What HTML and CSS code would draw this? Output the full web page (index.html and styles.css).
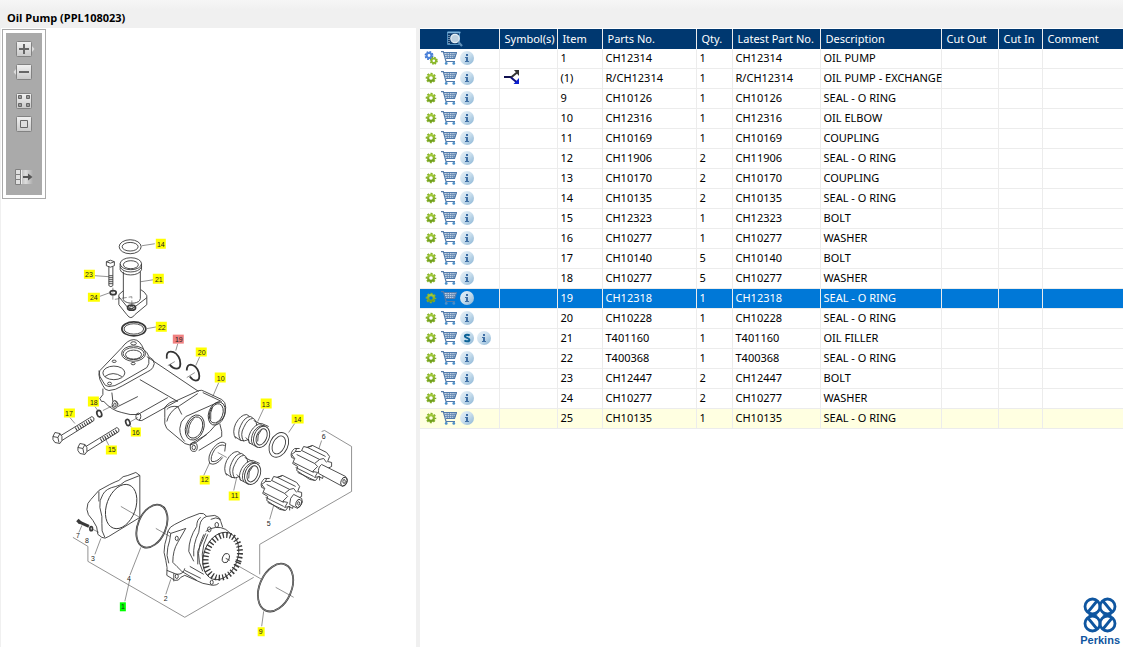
FILE: index.html
```html
<!DOCTYPE html>
<html lang="en">
<head>
<meta charset="utf-8">
<title>Oil Pump (PPL108023)</title>
<link rel="stylesheet" href="styles.css">
</head>
<body>
<svg class="defs" aria-hidden="true">
  <defs>
    <linearGradient id="g-green" x1="0" y1="0" x2="0" y2="1"><stop offset="0" stop-color="#a2c93a"/><stop offset="1" stop-color="#6f9d1c"/></linearGradient>
    <linearGradient id="g-disc" x1="0" y1="0" x2="1" y2="1"><stop offset="0" stop-color="#e8f1f8"/><stop offset=".5" stop-color="#c9deed"/><stop offset="1" stop-color="#86b2d4"/></linearGradient>
    <linearGradient id="g-btn" x1="0" y1="0" x2="0" y2="1"><stop offset="0" stop-color="#f2f2f2"/><stop offset="1" stop-color="#c8c8c8"/></linearGradient>
    <linearGradient id="g-fade"><stop offset="0" stop-color="#bbb"/><stop offset=".4" stop-color="#ddd"/><stop offset="1" stop-color="#aaa"/></linearGradient>
    <symbol id="cog" viewBox="0 0 14 14">
      <circle cx="7" cy="7" r="4.3" fill="none" stroke="#84b128" stroke-width="2" stroke-dasharray="2 1.377" stroke-dashoffset="1"/>
      <circle cx="7" cy="7" r="2.9" fill="none" stroke="url(#g-green)" stroke-width="2.2"/>
    </symbol>
    <symbol id="cogs" viewBox="0 0 14 14">
      <circle cx="5" cy="4.5" r="3.5" fill="none" stroke="#3c73cf" stroke-width="1.9" stroke-dasharray="1.6 1.15"/>
      <circle cx="5" cy="4.5" r="2.4" fill="none" stroke="#4c82da" stroke-width="2"/>
      <circle cx="9.8" cy="9.8" r="3.2" fill="none" stroke="#7fae22" stroke-width="1.6" stroke-dasharray="1.5 1.01"/>
      <circle cx="9.8" cy="9.8" r="2.2" fill="none" stroke="#8bb92a" stroke-width="1.8"/>
    </symbol>
    <symbol id="cart" viewBox="0 0 16 14">
      <path d="M3 1.5h12.5l-2 6H5z" fill="#c3d2e3"/>
      <path d="M3.5 3.500h11.500M4 5.500h10.500M6 1.5l.5 6M8.500 1.500v6M11 1.500l-.4 6M13.300 1.500l-1 6" stroke="#5f86b3" stroke-width=".8" fill="none"/>
      <path d="M0 .6h2.300L5 10.500h9M3 1.500h12.500l-2 6H5" stroke="#527bab" stroke-width="1.200" fill="none"/>
      <circle cx="5.200" cy="12.400" r="1.400" fill="#4a8fc9"/><circle cx="12.800" cy="12.400" r="1.400" fill="#4a8fc9"/>
    </symbol>
    <symbol id="info" viewBox="0 0 14 14">
      <circle cx="7" cy="7" r="7" fill="url(#g-disc)"/>
      <path d="M6 3h2v2H6zM5 6h3v4h1v1H5v-1h1V7H5z" fill="#3f6fa5"/>
    </symbol>
    <symbol id="sub" viewBox="0 0 14 14">
      <circle cx="7" cy="7" r="7" fill="url(#g-disc)"/>
      <path d="M9.600 4.600C8.800 3.500 4.900 3.100 4.900 5.200c0 2 4.500 1.300 4.500 3.500 0 2.200-3.700 2-4.900.7" fill="none" stroke="#0c6398" stroke-width="2"/>
    </symbol>
    <symbol id="branch" viewBox="0 0 16 16">
      <path d="M0 7h8" stroke="#101050" stroke-width="2"/>
      <path d="M7 7.500l6-5" stroke="#333" stroke-width="2"/><path d="M10 0h5v6z" fill="#333"/>
      <path d="M7 7.500l6 5" stroke="#101080" stroke-width="2"/><path d="M15 8v6H9.500z" fill="#0b1fd0"/>
    </symbol>
    <symbol id="look" viewBox="0 0 18 16">
      <path d="M1.500 1h12v12.500h-12z" fill="#0b3a6c" stroke="#4f8fc0" stroke-width="1"/>
      <path d="M1.500 1.500h13" stroke="#7db4dc" stroke-width="1.500"/><path d="M3 4v9" stroke="#cfe1ef" stroke-width="1" stroke-dasharray="1 1"/>
      <circle cx="9" cy="7.500" r="4.200" fill="#bcd0df" stroke="#e3edf4" stroke-width="1.300"/>
      <path d="M12.300 11l3.700 4" stroke="#5f8fb8" stroke-width="2.200"/>
    </symbol>
  </defs>
</svg>

<header class="titlebar"><h1>Oil Pump (PPL108023)</h1></header>
<main class="panes">
<section class="drawing">
  <div class="toolbar" role="toolbar" aria-label="Drawing tools">
    <button type="button" aria-label="Zoom in"><svg viewBox="0 0 18 16"><path d="M17 5l2.500 3-2.500 3z" fill="#ddd"/><rect x="1.500" y=".5" width="15" height="15" rx="1" fill="url(#g-btn)" stroke="#828282"/><path d="M4 8h10M9 3v10" stroke="#666" stroke-width="2"/></svg></button>
    <button type="button" aria-label="Zoom out"><svg viewBox="0 0 18 16"><path d="M1 5L-1.500 8 1 11z" fill="#ddd"/><rect x="1.500" y=".5" width="15" height="15" rx="1" fill="url(#g-btn)" stroke="#828282"/><path d="M4 8h10" stroke="#666" stroke-width="2"/></svg></button>
    <button type="button" class="gap-above" aria-label="Tile view"><svg viewBox="0 0 18 16"><rect x="1.500" y=".5" width="15" height="15" rx="1" fill="url(#g-btn)" stroke="#828282"/><path d="M3.500 2.500h3v3h-3zM11.500 2.500h3v3h-3zM3.500 10.500h3v3h-3zM11.500 10.500h3v3h-3z" fill="#999" stroke="#666"/></svg></button>
    <button type="button" aria-label="Fit to window"><svg viewBox="0 0 18 16"><rect x="1.500" y=".5" width="15" height="15" rx="1" fill="url(#g-btn)" stroke="#828282"/><path d="M5.500 4.500h7v7h-7z" fill="#ddd" stroke="#666"/></svg></button>
    <button type="button" class="gap-wide" aria-label="Export list"><svg viewBox="0 0 18 16"><path d="M6 1h12v14H6z" fill="url(#g-fade)"/><path d="M.5.500h5v5h-5zM.5 5.500h5v5h-5zM.5 10.500h5v5h-5z" fill="#e0e0e0" stroke="#808080"/><path d="M6.500 1v14" stroke="#eee"/><path d="M8 8h6" stroke="#555" stroke-width="2"/><path d="M13 4.500L17.500 8 13 11.500z" fill="#555"/></svg></button>
  </div>
  <svg class="diagram" viewBox="1 28 415 619" role="img" aria-label="Exploded view of the oil pump">
    <!-- frames, leaders and axes -->
    <g class="lead">
      <path d="M322 432l3-1 27 16v45l-92 53v30M73 538l15 9v15l97 56 69-40"/>
      <path d="M142 246l13-2M95 276l14 1M141 282l13-2M99 297l11-4M147 329l11-2M178 344l-2 7M200 357l-4 9M219 383l-6 14M95 407l3 4M70 418l5 6M132 428l-3-3M109 446l-4-8M264 409l-6 13M295 424l-6 9M204 476l6-13M234 491l3-13M322 441l-3 9M270 520l4-14M130 576l11-28M95 555l6-16M166 595l5-15M125 602l5-22M262 627l2-15M79 533l3-7"/>
      <path d="M121 507l19 11M156 529l14 8M227 560l35 20M276 588l18 10M168 366l7-4M187 378l8-5M103 411l10-5M131 422l7-4M218 453l9 5M93 530l6 3" />
      <path d="M113 288v12l19-3v9" stroke-dasharray="5 2"/>
    </g>
    <!-- filler tube, rings and bolt -->
    <g class="ink">
      <ellipse cx="130.300" cy="247" rx="11" ry="7"/><ellipse cx="130.300" cy="247" rx="8" ry="4.300"/>
      <ellipse cx="131" cy="264" rx="10.700" ry="6"/><ellipse cx="131" cy="265" rx="7.500" ry="4"/>
      <path d="M120.300 264v6c2 7 19 7 21.400 0v-6M120.300 267c2 7 19 7 21.400 0M123.500 272v27c-1 5 16 7 17 0v-27M123.500 291l-4.500 4v10l8 10q4 6 8 0l12-10v-9q-2-4-6-6M119 297l9 11q3 3 6 0l13-10"/>
      <ellipse cx="131.700" cy="308" rx="4" ry="2.500" class="heavy"/><ellipse cx="131.700" cy="308" rx="2" ry="1"/>
      <path d="M106.500 262q4-3 8 0v4q-4 3-8 0zM106.500 262q4 3 8 0M109 267v19q2 2 4 0v-19M109 276h4M109 278h4M109 280h4M109 282h4M109 284h4"/>
      <ellipse cx="113.300" cy="293" rx="3" ry="2" class="heavy"/>
      <ellipse cx="134" cy="329.300" rx="12" ry="7" class="heavy"/><ellipse cx="134" cy="329.300" rx="9.800" ry="5.200"/>
    </g>
    <!-- elbow -->
    <g class="ink">
      <path d="M122 348q6-8 12-8t10 10q4 3 5 7l4 3q3 4 0 8-2 3-5 4l-25 14q-8 5-14 5-4 0-6-5l-3-6q-2-6 0-9z"/>
      <path d="M99 371q0 6 4 11 2 5 6 5 6 0 12-4l26-15q3-3 2-10"/>
      <ellipse cx="133.700" cy="354" rx="12" ry="7.700"/><ellipse cx="133.700" cy="354" rx="10.500" ry="6"/><ellipse cx="133.700" cy="355" rx="8" ry="4.500"/>
      <ellipse cx="133.700" cy="343.700" rx="2.800" ry="1.600"/><ellipse cx="114.300" cy="361.700" rx="2" ry="1.200"/><ellipse cx="133.300" cy="364" rx="2" ry="1.200"/><ellipse cx="109.700" cy="384" rx="2" ry="1.400"/>
      <ellipse cx="114" cy="373.300" rx="11" ry="6.800"/><path d="M105 377q8-6 17 0"/>
      <path d="M147 357l52 35M140 380l38 22M103 389v6l-3 4q1 4 4 3 8 9 18 11 8 3 17 2M112 393l1 9M118 407l20-10M138 415l30-17M142 421l36-20"/>
      <ellipse cx="115" cy="405" rx="2.700" ry="4"/><ellipse cx="115" cy="405.500" rx="1.200" ry="2"/><ellipse cx="138.500" cy="417" rx="2.500" ry="3.500"/><path d="M139 421l3 0M115 401l4 4"/>
      <path d="M199 391q3-1 6 1l17 8q4 2 4 8l-1 7q-1 5-7 8l-8 9q-8 7-15 12-5 3-10 0l-18-15q-3-4-2-11v-10q4-6 12-7z"/>
      <path d="M167 410q3-4 11-3l4 8M167 422q2-10 13-16l18-12M186 417q-6 5-6 12 0 8 5 13M186 417l34-15M203 393l19 9"/>
      <g transform="rotate(20 195 428)"><ellipse cx="195" cy="428" rx="9" ry="13"/><ellipse cx="195" cy="428" rx="7.500" ry="11"/></g>
      <path d="M194 419q-6 6-5 15"/>
      <g transform="rotate(20 217 414)"><ellipse cx="217" cy="414" rx="8" ry="12"/><ellipse cx="216.500" cy="414" rx="6.500" ry="10"/></g>
      <path d="M213 407q-3 6-2 13M220 424l2 8v5l-23 14M190 445l17-10"/>
      <ellipse cx="194" cy="447.500" rx="3.500" ry="4.500"/><ellipse cx="194" cy="448" rx="1.700" ry="2.300"/>
    </g>
    <!-- long bolts and washers -->
    <g class="ink">
      <g id="long-bolt"><path d="M61 436l31-19q3 1 2 4l-32 20M53 437l2-4 5 1 2 3v4l-2 3-5-1-2-3zM53 437l5 1 2-4M58 438l1 5"/>
      <path d="M76 430l17-10" stroke-width="4" stroke-dasharray="1 1.500"/></g>
      <use href="#long-bolt" x="25" y="11"/>
      <ellipse cx="99.300" cy="414.300" rx="2.300" ry="3.300" transform="rotate(-20 99 414)" class="heavy"/>
      <ellipse cx="128" cy="423" rx="2" ry="3.200" transform="rotate(-20 128 423)" class="heavy"/>
      <path d="M167 359q-1-7 4-7 6 0 9 8 2 9-3 9-4 0-7-4M187 371q0-6 4-6 6 1 8 8 2 8-3 8-3 0-6-4" class="ring"/>
      <path d="M226 444q-5-4-12 4-7 9-4 16 6 3 13-6M225 446q-5-2-10 4-5 8-3 12 5 1 10-5M226 444l-1 8" />
    </g>
    <!-- couplings -->
    <g class="ink">
      <g id="coupling">
        <path d="M236 439q-4-6 0-15 5-9 11-9l3 2M241 441q-4-7 0-15 4-9 10-9l4 3q2 3 2 6M244 442q-4-7 0-14 4-9 9-9M235 437l6 4q4 1 8-1M254 421l8 4M246 438l4 4M250 444q-3-4 1-12 5-8 11-8l7 3M249 443l9 5"/>
        <path d="M253 445q-3-5 1-13 5-7 11-6"/>
        <g transform="rotate(22 261 437)"><ellipse cx="262" cy="437" rx="7.500" ry="11" class="part"/><ellipse cx="262" cy="437" rx="5" ry="8.500"/></g>
        <path d="M262 430q-5 5-4 12"/>
      </g>
      <use href="#coupling" x="-9" y="37"/>
      <g transform="rotate(25 279 445)"><ellipse cx="279.300" cy="445.300" rx="9" ry="13"/><ellipse cx="279.300" cy="445.300" rx="6" ry="9.500"/></g>
    </g>
    <!-- pinions -->
    <g class="ink">
      <g id="pinion">
        <path d="M300 449l-5 0q-5 4-3 9l5 2M297 449q-3 4-1 9"/>
        <path class="part" d="M302 451l2-4 4 1 5-2 14 7 3 4-2 5 4 1v4l-4 2 1 5-5 0-1 5-4-2-3 4-6-1-13-9 1-4-5-3 2-5-3-4 4-3 5 0z"/>
        <path d="M302 451l18 9M308 448l18 9M297 455l18 9M294 463l20 10M296 468l18 9M298 473l17 8M320 460l-5 4 3 3-5 5 5 1-3 5 5-1v4M320 460l4-1 3 4M313 446l-6 2"/>
      </g>
      <path class="part" d="M322 465l24 12q3 4 0 8l-3 2-24-13q-1-6 3-9z"/><ellipse cx="344.500" cy="482" rx="3" ry="4.500" transform="rotate(20 344 482)"/><ellipse cx="344.500" cy="482" rx="1.200" ry="2"/>
      <use href="#pinion" x="-30" y="30"/>
      <path class="part" d="M294 495l8 4q2 4-1 7l-3 3-8-4q0-7 4-10z"/><ellipse cx="299" cy="504" rx="2.700" ry="4.200" transform="rotate(20 299 504)"/><ellipse cx="299" cy="504" rx="1" ry="1.800"/>
    </g>
    <!-- end cover and its screw -->
    <g class="ink">
      <path d="M136 473l4 3v42l-31 19q-4 3-7 1l-4-3q0-8-5-14-6-6-6-11 0-7 4-10l8-9 11-6q6-3 9-4 4-5 9-5z"/>
      <path d="M140 476l-15 6q-4 4-9 5-10 2-13 8-4 6-3 13 3 10 2 16-1 8 3 14M99 492v10"/>
      <ellipse cx="121.300" cy="507" rx="14.500" ry="23" transform="rotate(20 121 507)"/>
      <path d="M79 522.500l10 4.500" stroke-width="3"/><path d="M77.500 520.500l3 3" stroke-width="3.500"/><ellipse cx="91.300" cy="529.300" rx="1.300" ry="2" class="heavy"/>
      <ellipse cx="152" cy="526.700" rx="14" ry="22.500" transform="rotate(23 152 527)" class="ring"/>
      <ellipse cx="276" cy="588.300" rx="16" ry="25" transform="rotate(23 276 588)" class="ring"/>
      <ellipse cx="276" cy="588.300" rx="16" ry="25" transform="rotate(23 276 588)" stroke="#ccc" stroke-width=".5"/>
      <ellipse cx="152" cy="526.700" rx="14" ry="22.500" transform="rotate(23 152 527)" stroke="#ccc" stroke-width=".4"/>
    </g>
    <!-- pump body and drive gear -->
    <g class="ink">
      <path d="M168 532q2-5 7-7l12-6 13-5q4-1 7 3l8-1q5 1 6 6l2 6M168 532q-1 7-3 13-2 8 1 16 2 7 1 15l8 5q4 1 6-3l4-2 18 8 10 2q4 0 6-2M168 532l3 2 15-5-8 14q-5 8-5 20 4 4 9 9l15 9M201 518q-4 2-4 9-8 12-8 25l5 10M207 517q-6 2-7 9l-1 7q-6 12-5 24M211 520q5-3 10 0M174 574v8M167 571l10 4q7 0 8-6M206 534l-8 18 0 13M171 534q-1 8-3 14-2 8 1 16"/>
      <path d="M206 532q10-7 20-2l7 6M204 535q-10 20-1 37M208 535q-10 20-2 39M185 571l16 8M190 567l14 8"/>
      <ellipse cx="177" cy="539" rx="1.500" ry="2.200"/><ellipse cx="209.500" cy="530" rx="1.800" ry="2.500"/><ellipse cx="217" cy="525.500" rx="1.800" ry="2.500"/><ellipse cx="177" cy="577" rx="1.500" ry="2.200"/><ellipse cx="212" cy="583" rx="1.500" ry="2.200"/>
      <ellipse class="part" cx="221" cy="557" rx="17" ry="24.500" transform="rotate(20 222 557)"/>
      <ellipse cx="223" cy="557" rx="16.500" ry="22" transform="rotate(20 223 557)" stroke-width="6" stroke-dasharray="1.400 2.200"/>
      <ellipse class="part" cx="226" cy="558.700" rx="3.300" ry="4.800" transform="rotate(20 226 559)"/>
      <path d="M226 559l4 2"/>
    </g>
    <!-- item numbers -->
    <g class="tag">
      <path d="M156 239h10v10h-10zM84 270h11v9H84zM153 274h11v10h-11zM88 293h12v9H88zM156 322h11v10h-11zM196 348h11v9h-11zM215 373h11v10h-11zM88 397h11v10H88zM64 409h11v9H64zM131 428h10v9h-10zM106 446h11v9h-11zM261 399h11v10h-11zM292 415h12v9h-12zM200 476h10v9h-10zM229 492h11v9h-11zM258 628h7v9h-7z"/>
      <path class="tag-picked" d="M173 335h11v9h-11z"/><path class="tag-current" d="M120 603h6v9h-6z"/>
      <text x="161" y="247">14</text><text x="89" y="277">23</text><text x="159" y="282">21</text><text x="94" y="300">24</text><text x="162" y="330">22</text><text x="179" y="342">19</text><text x="202" y="355">20</text><text x="221" y="381">10</text><text x="94" y="405">18</text><text x="69" y="416">17</text><text x="136" y="435">16</text><text x="112" y="453">15</text><text x="266" y="407">13</text><text x="298" y="422">14</text><text x="205" y="483">12</text><text x="235" y="499">11</text><text x="261" y="635">9</text><text x="123" y="610">1</text>
      <text x="324" y="440">6</text><text x="269" y="527">5</text><text x="129" y="582">4</text><text x="93" y="562">3</text><text x="78" y="539">7</text><text x="87" y="544">8</text><text x="166" y="602">2</text>
    </g>
  </svg>
</section>

<section class="parts">
<table>
<colgroup><col class="c-tools"><col class="c-symbol"><col class="c-item"><col class="c-part"><col class="c-qty"><col class="c-latest"><col class="c-desc"><col class="c-out"><col class="c-in"><col></colgroup>
<thead><tr><th class="look" aria-label="Actions"><svg><use href="#look"/></svg></th><th>Symbol(s)</th><th>Item</th><th>Parts No.</th><th>Qty.</th><th>Latest Part No.</th><th>Description</th><th>Cut Out</th><th>Cut In</th><th>Comment</th></tr></thead>
<tbody>
<tr><td><div class="acts"><button type="button" aria-label="Assembly"><svg><use href="#cogs"/></svg></button><button type="button" class="cart" aria-label="Add to cart"><svg><use href="#cart"/></svg></button><button type="button" aria-label="Information"><svg><use href="#info"/></svg></button></div></td><td></td><td>1</td><td>CH12314</td><td>1</td><td>CH12314</td><td>OIL PUMP</td><td></td><td></td><td></td></tr>
<tr><td><div class="acts"><button type="button" aria-label="Part"><svg><use href="#cog"/></svg></button><button type="button" class="cart" aria-label="Add to cart"><svg><use href="#cart"/></svg></button><button type="button" aria-label="Information"><svg><use href="#info"/></svg></button></div></td><td><svg class="branch" role="img" aria-label="Exchange"><use href="#branch"/></svg></td><td>(1)</td><td>R/CH12314</td><td>1</td><td>R/CH12314</td><td>OIL PUMP - EXCHANGE</td><td></td><td></td><td></td></tr>
<tr><td><div class="acts"><button type="button" aria-label="Part"><svg><use href="#cog"/></svg></button><button type="button" class="cart" aria-label="Add to cart"><svg><use href="#cart"/></svg></button><button type="button" aria-label="Information"><svg><use href="#info"/></svg></button></div></td><td></td><td>9</td><td>CH10126</td><td>1</td><td>CH10126</td><td>SEAL - O RING</td><td></td><td></td><td></td></tr>
<tr><td><div class="acts"><button type="button" aria-label="Part"><svg><use href="#cog"/></svg></button><button type="button" class="cart" aria-label="Add to cart"><svg><use href="#cart"/></svg></button><button type="button" aria-label="Information"><svg><use href="#info"/></svg></button></div></td><td></td><td>10</td><td>CH12316</td><td>1</td><td>CH12316</td><td>OIL ELBOW</td><td></td><td></td><td></td></tr>
<tr><td><div class="acts"><button type="button" aria-label="Part"><svg><use href="#cog"/></svg></button><button type="button" class="cart" aria-label="Add to cart"><svg><use href="#cart"/></svg></button><button type="button" aria-label="Information"><svg><use href="#info"/></svg></button></div></td><td></td><td>11</td><td>CH10169</td><td>1</td><td>CH10169</td><td>COUPLING</td><td></td><td></td><td></td></tr>
<tr><td><div class="acts"><button type="button" aria-label="Part"><svg><use href="#cog"/></svg></button><button type="button" class="cart" aria-label="Add to cart"><svg><use href="#cart"/></svg></button><button type="button" aria-label="Information"><svg><use href="#info"/></svg></button></div></td><td></td><td>12</td><td>CH11906</td><td>2</td><td>CH11906</td><td>SEAL - O RING</td><td></td><td></td><td></td></tr>
<tr><td><div class="acts"><button type="button" aria-label="Part"><svg><use href="#cog"/></svg></button><button type="button" class="cart" aria-label="Add to cart"><svg><use href="#cart"/></svg></button><button type="button" aria-label="Information"><svg><use href="#info"/></svg></button></div></td><td></td><td>13</td><td>CH10170</td><td>2</td><td>CH10170</td><td>COUPLING</td><td></td><td></td><td></td></tr>
<tr><td><div class="acts"><button type="button" aria-label="Part"><svg><use href="#cog"/></svg></button><button type="button" class="cart" aria-label="Add to cart"><svg><use href="#cart"/></svg></button><button type="button" aria-label="Information"><svg><use href="#info"/></svg></button></div></td><td></td><td>14</td><td>CH10135</td><td>2</td><td>CH10135</td><td>SEAL - O RING</td><td></td><td></td><td></td></tr>
<tr><td><div class="acts"><button type="button" aria-label="Part"><svg><use href="#cog"/></svg></button><button type="button" class="cart" aria-label="Add to cart"><svg><use href="#cart"/></svg></button><button type="button" aria-label="Information"><svg><use href="#info"/></svg></button></div></td><td></td><td>15</td><td>CH12323</td><td>1</td><td>CH12323</td><td>BOLT</td><td></td><td></td><td></td></tr>
<tr><td><div class="acts"><button type="button" aria-label="Part"><svg><use href="#cog"/></svg></button><button type="button" class="cart" aria-label="Add to cart"><svg><use href="#cart"/></svg></button><button type="button" aria-label="Information"><svg><use href="#info"/></svg></button></div></td><td></td><td>16</td><td>CH10277</td><td>1</td><td>CH10277</td><td>WASHER</td><td></td><td></td><td></td></tr>
<tr><td><div class="acts"><button type="button" aria-label="Part"><svg><use href="#cog"/></svg></button><button type="button" class="cart" aria-label="Add to cart"><svg><use href="#cart"/></svg></button><button type="button" aria-label="Information"><svg><use href="#info"/></svg></button></div></td><td></td><td>17</td><td>CH10140</td><td>5</td><td>CH10140</td><td>BOLT</td><td></td><td></td><td></td></tr>
<tr><td><div class="acts"><button type="button" aria-label="Part"><svg><use href="#cog"/></svg></button><button type="button" class="cart" aria-label="Add to cart"><svg><use href="#cart"/></svg></button><button type="button" aria-label="Information"><svg><use href="#info"/></svg></button></div></td><td></td><td>18</td><td>CH10277</td><td>5</td><td>CH10277</td><td>WASHER</td><td></td><td></td><td></td></tr>
<tr class="selected"><td><div class="acts"><button type="button" aria-label="Part"><svg><use href="#cog"/></svg></button><button type="button" class="cart" aria-label="Add to cart"><svg><use href="#cart"/></svg></button><button type="button" aria-label="Information"><svg><use href="#info"/></svg></button></div></td><td></td><td>19</td><td>CH12318</td><td>1</td><td>CH12318</td><td>SEAL - O RING</td><td></td><td></td><td></td></tr>
<tr><td><div class="acts"><button type="button" aria-label="Part"><svg><use href="#cog"/></svg></button><button type="button" class="cart" aria-label="Add to cart"><svg><use href="#cart"/></svg></button><button type="button" aria-label="Information"><svg><use href="#info"/></svg></button></div></td><td></td><td>20</td><td>CH10228</td><td>1</td><td>CH10228</td><td>SEAL - O RING</td><td></td><td></td><td></td></tr>
<tr><td><div class="acts"><button type="button" aria-label="Part"><svg><use href="#cog"/></svg></button><button type="button" class="cart" aria-label="Add to cart"><svg><use href="#cart"/></svg></button><button type="button" aria-label="Supersession"><svg><use href="#sub"/></svg></button><button type="button" aria-label="Information"><svg><use href="#info"/></svg></button></div></td><td></td><td>21</td><td>T401160</td><td>1</td><td>T401160</td><td>OIL FILLER</td><td></td><td></td><td></td></tr>
<tr><td><div class="acts"><button type="button" aria-label="Part"><svg><use href="#cog"/></svg></button><button type="button" class="cart" aria-label="Add to cart"><svg><use href="#cart"/></svg></button><button type="button" aria-label="Information"><svg><use href="#info"/></svg></button></div></td><td></td><td>22</td><td>T400368</td><td>1</td><td>T400368</td><td>SEAL - O RING</td><td></td><td></td><td></td></tr>
<tr><td><div class="acts"><button type="button" aria-label="Part"><svg><use href="#cog"/></svg></button><button type="button" class="cart" aria-label="Add to cart"><svg><use href="#cart"/></svg></button><button type="button" aria-label="Information"><svg><use href="#info"/></svg></button></div></td><td></td><td>23</td><td>CH12447</td><td>2</td><td>CH12447</td><td>BOLT</td><td></td><td></td><td></td></tr>
<tr><td><div class="acts"><button type="button" aria-label="Part"><svg><use href="#cog"/></svg></button><button type="button" class="cart" aria-label="Add to cart"><svg><use href="#cart"/></svg></button><button type="button" aria-label="Information"><svg><use href="#info"/></svg></button></div></td><td></td><td>24</td><td>CH10277</td><td>2</td><td>CH10277</td><td>WASHER</td><td></td><td></td><td></td></tr>
<tr class="noted"><td><div class="acts"><button type="button" aria-label="Part"><svg><use href="#cog"/></svg></button><button type="button" class="cart" aria-label="Add to cart"><svg><use href="#cart"/></svg></button><button type="button" aria-label="Information"><svg><use href="#info"/></svg></button></div></td><td></td><td>25</td><td>CH10135</td><td>1</td><td>CH10135</td><td>SEAL - O RING</td><td></td><td></td><td></td></tr>
</tbody>
</table>
<div class="brand">
  <svg viewBox="0 0 34 36" aria-hidden="true"><g fill="none" stroke="#0f56a0" stroke-width="2.800">
    <ellipse cx="9.500" cy="9.500" rx="7.500" ry="7.500"/><ellipse cx="24.500" cy="9.500" rx="7.500" ry="7.500"/><ellipse cx="9.500" cy="26.500" rx="7.500" ry="7.500"/><ellipse cx="24.500" cy="26.500" rx="7.500" ry="7.500"/>
    <path d="M5 15L14 4M29 15L20 4M5 21l9 11M29 21l-9 11M6 17q4 2 8-1M28 17q-4 2-8-1M6 19q4-2 8 1M28 19q-4-2-8 1"/></g></svg>
  <span>Perkins</span>
</div>
</section>
</main>
</body>
</html>
```

FILE: styles.css
```css
* { box-sizing: border-box; }
body {
  margin: 0;
  min-height: 100vh;
  display: flex;
  flex-direction: column;
  background: #f0f0f0;
  color: #000;
  font: 11px/16px "Noto Sans", "Open Sans", sans-serif;
}
.defs { position: absolute; width: 0; height: 0; }
button { padding: 0; border: 0; background: none; display: flex; }

.titlebar { height: 28px; padding: 10px 7px 0; background: linear-gradient(#f6f6f6, #f0f0f0 10px); }
.titlebar h1 { margin: 0; font: bold 11px/16px "Open Sans", sans-serif; }

.panes { flex: 1; display: grid; grid-template-columns: 37% 1fr; column-gap: 4px; }
.drawing { background: #fff; border-left: 1px solid #f0f0f0; display: grid; align-items: start; }
.drawing > * { grid-area: 1 / 1; }
.toolbar {
  justify-self: start;
  z-index: 1;
  margin: 2px;
  padding: 8px 9px 10px;
  display: flex;
  flex-direction: column;
  gap: 7px;
  background: #aaa;
  border: 3px solid #fff;
  outline: 1px solid #aaa;
}
.toolbar svg { width: 18px; height: 16px; overflow: visible; }
.toolbar .gap-above { margin-top: 6px; }
.toolbar .gap-wide { margin-top: 30px; }

.diagram { width: 100%; height: auto; display: block; }
.diagram .ink { fill: none; stroke: #3a3a3a; stroke-width: .9; }
.diagram .part { fill: #fff; }
.diagram .heavy { stroke-width: 1.7; }
.diagram .ring { stroke: #333; stroke-width: 1.8; }
.diagram .lead { fill: none; stroke: #777; stroke-width: .8; }
.tag { fill: #222; font: 7px "Liberation Sans", Arial, sans-serif; text-anchor: middle; }
.tag path { fill: #ff0; }
.tag .tag-picked { fill: #f08080; }
.tag .tag-current { fill: #0f0; }

.parts { background: #fff; padding-top: 1px; display: flex; flex-direction: column; }
table { width: 100%; table-layout: fixed; border-collapse: separate; border-spacing: 0; }
.c-tools { width: 80px; }
.c-symbol { width: 58px; }
.c-item { width: 45px; }
.c-part { width: 94px; }
.c-qty { width: 36px; }
.c-latest { width: 88px; }
.c-desc { width: 121px; }
.c-out { width: 57px; }
.c-in { width: 44px; }
th, td { height: 20px; padding: 0 0 0 3px; text-align: left; white-space: nowrap; border-right: 1px solid #ececec; }
th:last-child, td:last-child { border-right: 0; }
th { padding-left: 5px; background: #003870; color: #fff; font-weight: 400; }
td { padding-bottom: 2px; border-bottom: 1px solid #ececec; }
.look { padding: 0; }
.look svg { width: 18px; height: 16px; display: block; margin: 0 auto 0 26px; }
.acts { display: flex; align-items: center; gap: 3px; padding-left: 1px; }
.acts svg { width: 14px; height: 14px; }
.acts .cart svg { width: 16px; }
.branch { width: 16px; height: 16px; display: block; margin-left: 1px; }
.selected td { background: #0078d7; color: #fff; }
.noted td { background: #ffffe1; }

.brand { margin: auto 3px 0 auto; display: flex; flex-direction: column; align-items: center; color: #0f56a0; font: bold 11px/14px "Liberation Sans", Arial, sans-serif; }
.brand svg { width: 34px; height: 36px; }
```
